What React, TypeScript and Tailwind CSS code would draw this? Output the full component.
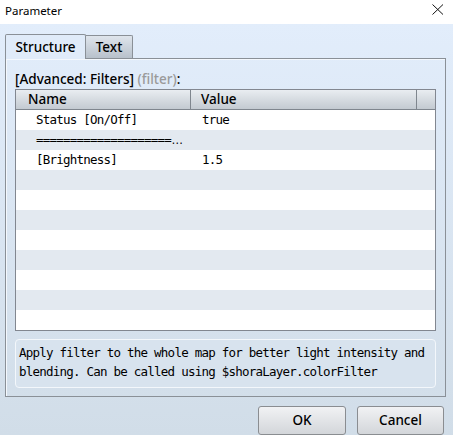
import React from "react";

const ui = { fontFamily: '"Noto Sans", "Open Sans", sans-serif' };
const mono = { fontFamily: '"DejaVu Sans Mono", "Liberation Mono", monospace' };

type Row = { name: React.ReactNode; value: string };

const rows: Row[] = [
  { name: "Status [On/Off]", value: "true" },
  {
    name: (
      <>
        {"===================="}
        <span style={{ fontFamily: '"Liberation Sans", sans-serif', letterSpacing: 0 }} className="text-[12px]">
          …
        </span>
      </>
    ),
    value: "",
  },
  { name: "[Brightness]", value: "1.5" },
  ...Array.from({ length: 8 }, () => ({ name: "", value: "" })),
];

function CloseIcon() {
  return (
    <svg width="12" height="11" viewBox="0 0 12 11" className="block">
      <path d="M0.5 0.5 L11 10.5 M11 0.5 L0.5 10.5" stroke="#111" strokeWidth="1" fill="none" />
    </svg>
  );
}

export default function App() {
  return (
    <div className="w-[453px] h-[435px] flex flex-col overflow-hidden text-black" style={ui}>
      {/* title bar */}
      <div className="h-[24px] bg-white flex items-center justify-between pl-[5px] pr-[9px]">
        <span className="text-[11.5px] leading-none pb-[3px]">Parameter</span>
        <div className="pb-[6px]">
          <CloseIcon />
        </div>
      </div>

      {/* dialog body */}
      <div className="flex-1 flex flex-col bg-gradient-to-b from-[#e2edfb] to-[#d1dde8] px-[5px] pt-[10px]">
        {/* tabs */}
        <div className="flex h-[24px] items-end relative z-10">
          <div className="w-[81px] h-[25px] -mb-[1px] border border-b-0 border-[#8a9097] rounded-t-[2px] bg-[#e0ebf9] flex items-center justify-center text-[13.5px] font-medium leading-none">
            <span className="pt-[1px]">Structure</span>
          </div>
          <div className="w-[47px] h-[23px] border border-l-0 border-b-0 border-[#8a9097] rounded-tr-[2px] bg-gradient-to-b from-[#dfe5ec] to-[#b8c1cb] flex items-center justify-center text-[13.5px] font-medium leading-none">
            <span className="pt-[1px]">Text</span>
          </div>
        </div>

        {/* tab panel */}
        <div className="w-[441px] h-[339px] border border-[#8a9097] shadow-[inset_1px_1px_0_#f4f8fd] flex flex-col px-[9px]">
          <div className="h-[30px] flex items-end pb-[2px] text-[13.5px] font-medium leading-[16px]">
            <span>
              [Advanced: Filters] <span className="text-[#9a9a9a]">(filter)</span>:
            </span>
          </div>

          {/* list */}
          <div className="w-[421px] border border-[#828790] bg-white flex flex-col">
            <div className="h-[20px] flex border-b border-[#7f868e] bg-gradient-to-b from-[#e9edf1] to-[#c3cad1] text-[13.5px] font-medium leading-none">
              <div className="w-[175px] border-r border-[#7f868e] flex items-center pl-[12px]">Name</div>
              <div className="w-[226px] border-r border-[#7f868e] flex items-center pl-[10px]">Value</div>
              <div className="flex-1" />
            </div>
            {rows.map((r, i) => (
              <div
                key={i}
                className={`h-[20px] flex items-center text-[12.5px] tracking-[-0.77px] leading-none ${i % 2 === 1 ? "bg-[#e3e9f0]" : "bg-white"}`}
                style={mono}
              >
                <div className="w-[175px] shrink-0 pl-[20px] whitespace-nowrap">{r.name}</div>
                <div className="pl-[11px] whitespace-nowrap">{r.value}</div>
              </div>
            ))}
          </div>

          {/* help text */}
          <div
            className="mt-[8px] w-[421px] h-[49px] border border-[#f3f7fb] rounded-[4px] px-[3px] pt-[3px] text-[12.5px] tracking-[-0.77px] leading-[19px] bg-[#d8e3ee]"
            style={mono}
          >
            <div className="whitespace-nowrap">Apply filter to the whole map for better light intensity and</div>
            <div className="whitespace-nowrap">blending. Can be called using $shoraLayer.colorFilter</div>
          </div>
        </div>

        {/* buttons */}
        <div className="flex justify-end gap-[11px] pt-[9px] pr-[4px]">
          <button className="w-[88px] h-[29px] border border-[#8a8d91] rounded-[3px] bg-gradient-to-b from-[#f1f2f4] to-[#d3d6da] text-[13.5px] font-medium leading-none">
            OK
          </button>
          <button className="w-[87px] h-[29px] border border-[#8a8d91] rounded-[3px] bg-gradient-to-b from-[#f1f2f4] to-[#d3d6da] text-[13.5px] font-medium leading-none">
            Cancel
          </button>
        </div>
      </div>
    </div>
  );
}
